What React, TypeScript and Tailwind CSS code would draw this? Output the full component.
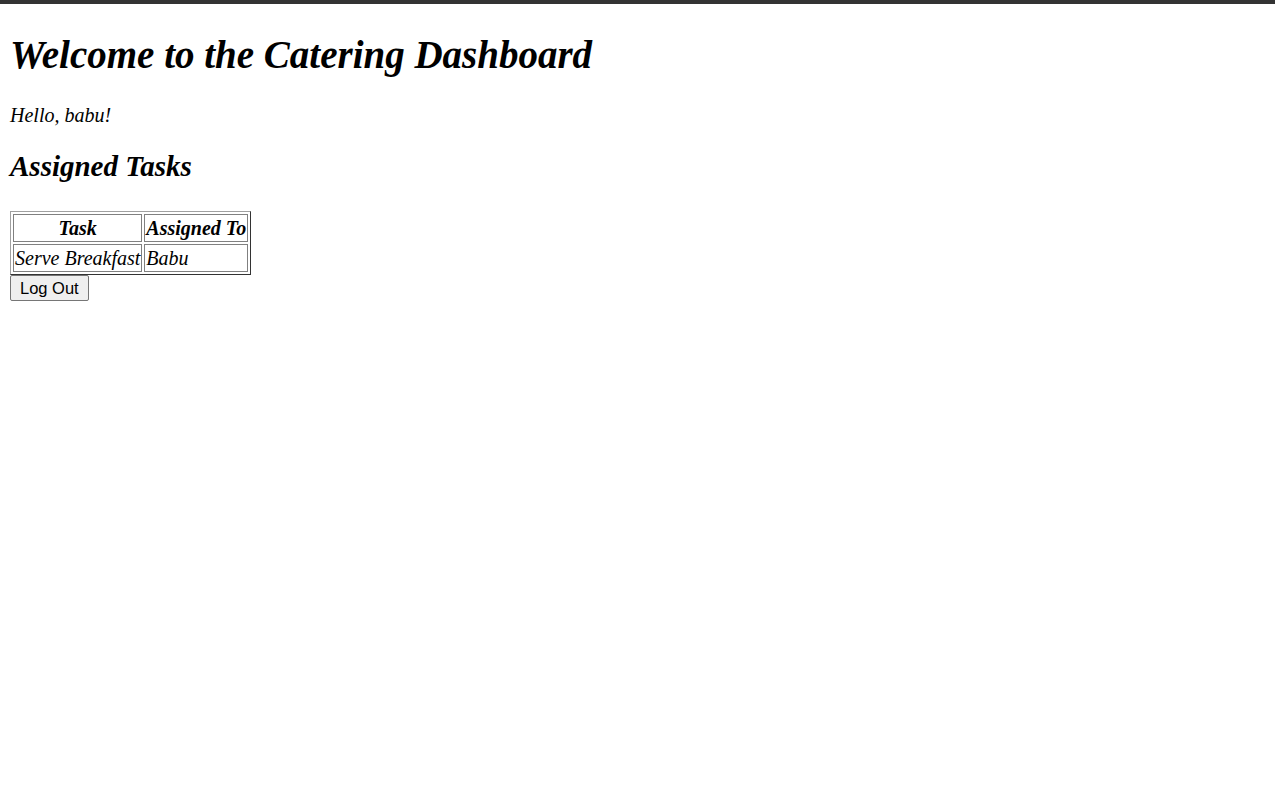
const tasks = [{ task: 'Serve Breakfast', assignedTo: 'Babu' }]

const App = () => {
	return (
		<div className="min-h-screen border-t-4 border-[#333333] bg-white p-[10px] font-['Liberation_Serif',serif] text-black italic">
			<h1 className="mt-[18px] mb-[27px] text-[39px] leading-[45px] font-bold">Welcome to the Catering Dashboard</h1>
			<p className="mb-[22px] text-[20px] leading-[23px]">Hello, babu!</p>
			<h2 className="mb-[28px] text-[29px] leading-[34px] font-bold">Assigned Tasks</h2>
			<table className="border-separate border-spacing-[2px] border border-t-[#a0a0a0] border-l-[#a0a0a0] border-r-[#333333] border-b-[#333333] text-[20px] leading-[24px]">
				<thead>
					<tr>
						<th className="border border-[#808080] px-px py-px font-bold">Task</th>
						<th className="border border-[#808080] px-px py-px font-bold">Assigned To</th>
					</tr>
				</thead>
				<tbody>
					{tasks.map(({ task, assignedTo }) => (
						<tr key={task}>
							<td className="border border-[#808080] px-px py-px">{task}</td>
							<td className="border border-[#808080] px-px py-px">{assignedTo}</td>
						</tr>
					))}
				</tbody>
			</table>
			<button className="block border border-[#767676] rounded-[2px] bg-[#efefef] px-[9px] py-[2px] font-['Liberation_Sans',sans-serif] text-[16.5px] not-italic leading-[20px]">
				Log Out
			</button>
		</div>
	)
}

export default App
